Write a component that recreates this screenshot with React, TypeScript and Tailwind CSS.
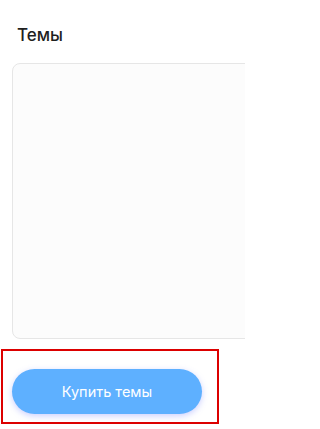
const App = () => {
  return (
    <div className="w-[245px] h-[429px] overflow-hidden bg-white font-['Inter',sans-serif]">
      <h3 className="pl-[17px] pt-[25px] text-[17px] leading-[20px] font-medium text-[#1f1f1f]">Темы</h3>

      <div className="ml-3 mt-[18px] w-[250px] h-[276px] rounded-lg border border-[#e6e6e6] bg-[#fcfcfc]" />

      <div className="ml-px mt-[10px] w-[218px] h-[75px] border-2 border-[#dc0000] pl-[9px] pt-[18px]">
        <button
          type="button"
          className="w-[190px] h-[45px] rounded-full bg-[#5eb0ff] text-[14.5px] text-white shadow-[0_2px_6px_rgba(110,120,255,0.35)]"
        >
          Купить темы
        </button>
      </div>
    </div>
  );
};

export default App;
